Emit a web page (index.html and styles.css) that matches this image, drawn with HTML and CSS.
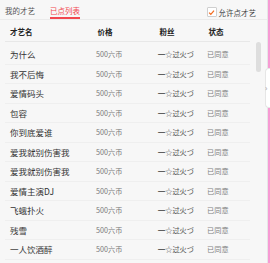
FILE: index.html
```html
<!DOCTYPE html>
<html lang="zh">
<head>
  <meta charset="UTF-8">
  <title>已点列表</title>
  <link rel="stylesheet" href="styles.css">
</head>
<body>
  <div class="wrap">
    <div class="panel">
      <div class="tabs">
        <span class="tab">我的才艺</span>
        <span class="tab active">已点列表</span>
        <label class="allow">
          <span class="check"><svg viewBox="0 0 10 10" width="7" height="7"><path d="M1.5 5.2 L4 7.6 L8.6 2.2" fill="none" stroke="#f36c20" stroke-width="1.8"/></svg></span>允许点才艺
        </label>
      </div>
      <div class="table">
        <div class="row head">
          <span>才艺名</span><span>价格</span><span>粉丝</span><span>状态</span>
        </div>
        <div class="list">
          <div class="row"><span class="name">为什么</span><span class="price">500六币</span><span class="fan">━☆过火づ</span><span class="state">已同意</span></div>
          <div class="row"><span class="name">我不后悔</span><span class="price">500六币</span><span class="fan">━☆过火づ</span><span class="state">已同意</span></div>
          <div class="row"><span class="name">爱情码头</span><span class="price">500六币</span><span class="fan">━☆过火づ</span><span class="state">已同意</span></div>
          <div class="row"><span class="name">包容</span><span class="price">500六币</span><span class="fan">━☆过火づ</span><span class="state">已同意</span></div>
          <div class="row"><span class="name">你到底爱谁</span><span class="price">500六币</span><span class="fan">━☆过火づ</span><span class="state">已同意</span></div>
          <div class="row"><span class="name">爱我就别伤害我</span><span class="price">500六币</span><span class="fan">━☆过火づ</span><span class="state">已同意</span></div>
          <div class="row"><span class="name">爱我就别伤害我</span><span class="price">500六币</span><span class="fan">━☆过火づ</span><span class="state">已同意</span></div>
          <div class="row"><span class="name">爱情主演DJ</span><span class="price">500六币</span><span class="fan">━☆过火づ</span><span class="state">已同意</span></div>
          <div class="row"><span class="name">飞蛾扑火</span><span class="price">500六币</span><span class="fan">━☆过火づ</span><span class="state">已同意</span></div>
          <div class="row"><span class="name">残雪</span><span class="price">500六币</span><span class="fan">━☆过火づ</span><span class="state">已同意</span></div>
          <div class="row"><span class="name">一人饮酒醉</span><span class="price">500六币</span><span class="fan">━☆过火づ</span><span class="state">已同意</span></div>
        </div>
        <div class="scrollbar"></div>
      </div>
    </div>
    <div class="edge"></div>
    <div class="handle">›</div>
  </div>
</body>
</html>
```
FILE: styles.css
```css
* { box-sizing: border-box; margin: 0; padding: 0; }
body {
  font-family: "Noto Sans CJK SC", "Noto Sans", sans-serif;
  background: #fff;
  width: 270px; height: 263px; overflow: hidden;
}
.wrap { display: flex; height: 263px; position: relative; }
.panel {
  flex: 1; background: #f7f7f7;
  border-right: 1px solid #e6e6e6;
  overflow: hidden;
}
.edge { width: 2px; background: #f79ad3; }
.handle {
  position: absolute; right: 0; top: 68px;
  width: 5px; height: 40px;
  background: #fff; border: 1px solid #e6e6e6; border-right: none;
  border-radius: 4px 0 0 4px;
  font-size: 8px; line-height: 38px; color: #999; text-indent: -1px;
}

.tabs {
  display: flex; align-items: flex-end;
  height: 20px; padding-left: 5px;
  border-bottom: 1px solid #ebebeb;
  font-size: 7.5px;
}
.tab { color: #555; line-height: 12px; height: 19px; padding-top: 5px; }
.tab + .tab { margin-left: 15px; }
.tab.active { color: #f2474f; border-bottom: 2px solid #f2474f; }
.allow {
  display: flex; align-items: center; align-self: center;
  margin-left: auto; margin-right: 11px; margin-top: 5px;
  color: #444; font-size: 7.5px;
}
.check {
  display: flex; align-items: center; justify-content: center;
  width: 10px; height: 10px; margin-right: 2px;
  background: #fff; border: 1px solid #cfcfcf; border-radius: 1px;
}

.table { position: relative; }
.list { padding-top: 3px; }
.row {
  display: grid; grid-template-columns: 86px 62px 49px 1fr;
  align-items: center;
  height: 19.5px; margin: 0 17px 0 5px; padding-left: 5px;
  border-bottom: 1px solid #efefef;
}
.head {
  height: 22px; padding-top: 2px;
  font-size: 7.5px; font-weight: 700; color: #222;
  border-bottom-color: #e8e8e8;
}
.head span + span { padding-left: 1.5px; }
.name { font-size: 8.5px; color: #333; }
.price, .fan, .state { font-size: 7.2px; color: #777; }
.fan { color: #555; }
.state { color: #808080; }
.scrollbar {
  position: absolute; right: 6px; top: 22px;
  width: 5px; height: 30px;
  background: #dedede; border-radius: 3px;
}
```
